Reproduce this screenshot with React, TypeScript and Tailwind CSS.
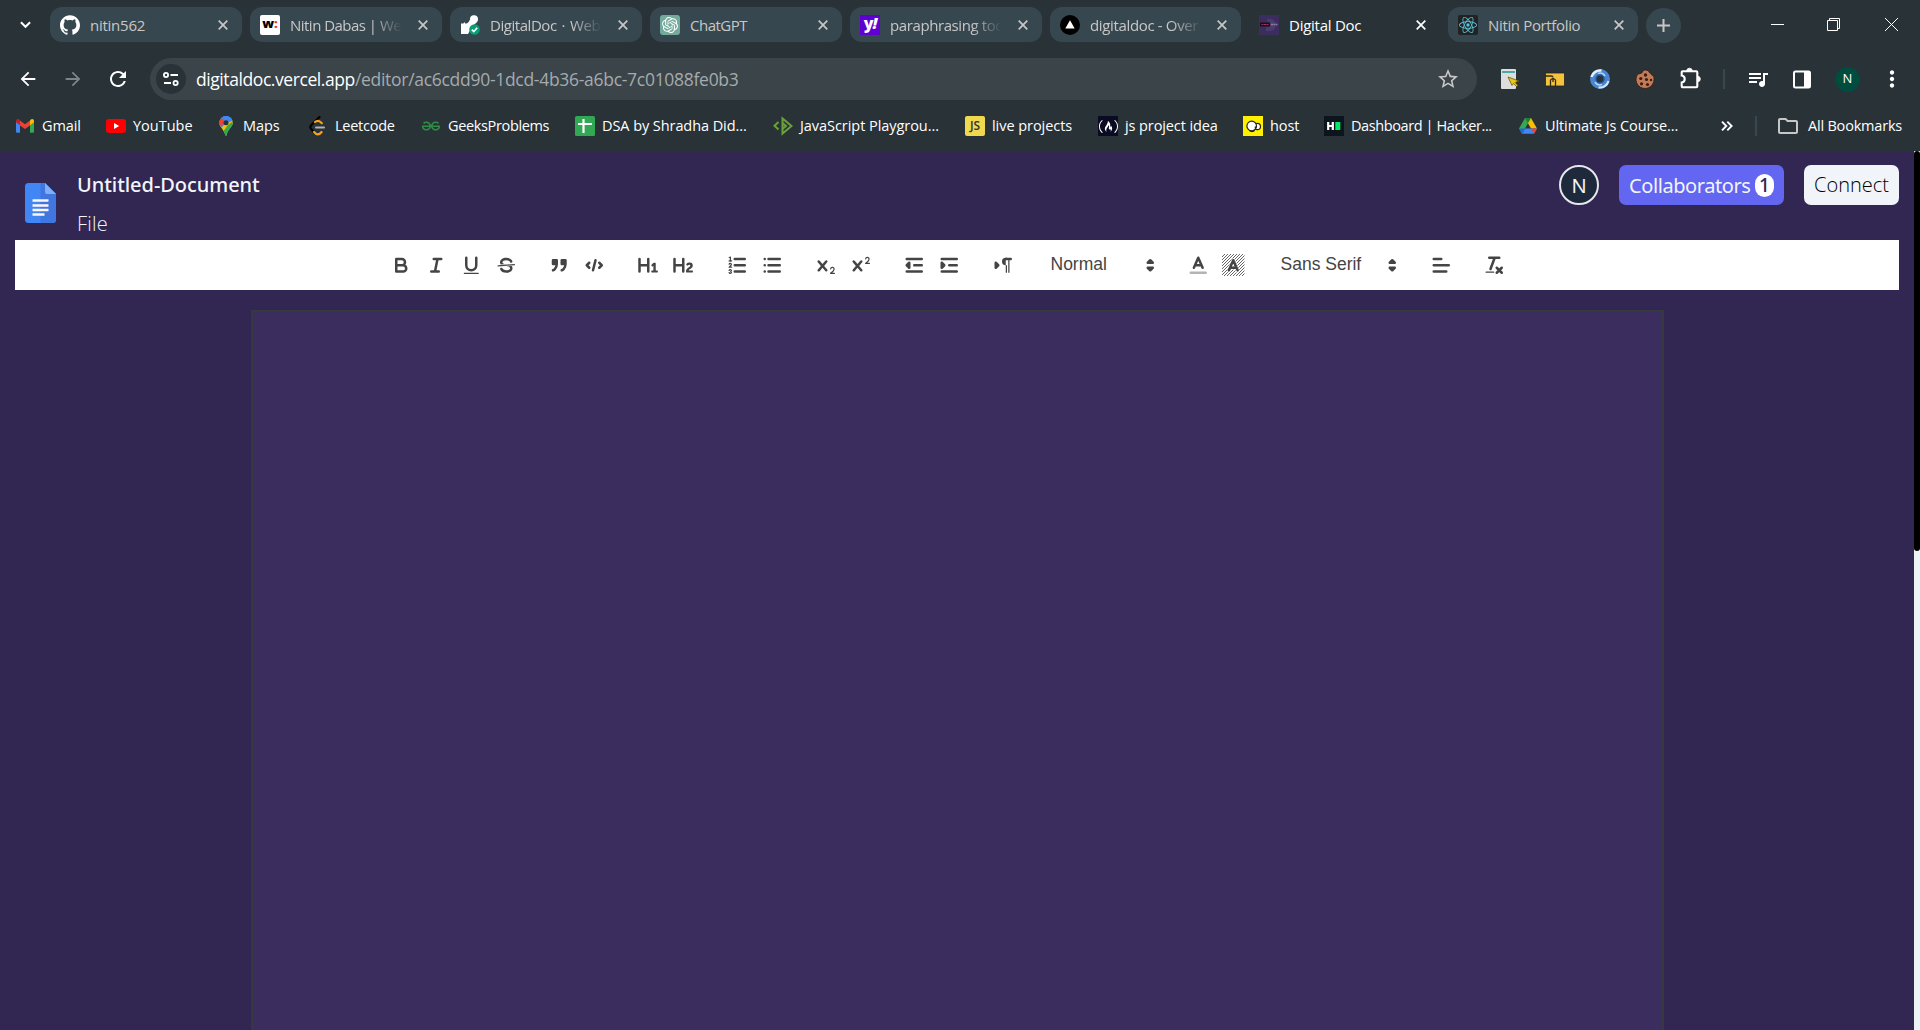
import React from "react";
import { SiGithub } from "react-icons/si";
import { SiOpenai, SiReact, SiGeeksforgeeks, SiFreecodecamp } from "react-icons/si";
import { MdOutlineQueueMusic, MdStarOutline, MdOutlineFolder, MdMoreVert, MdArrowBack, MdArrowForward, MdRefresh } from "react-icons/md";

type Kids = { children?: React.ReactNode };

/* ---------- favicons ---------- */
const Wellfound = () => (
  <span className="flex h-5 w-5 items-center justify-center rounded-[2px] bg-white pb-[3px] font-['Open_Sans',sans-serif] text-[13px] leading-none font-extrabold text-black">
    w<span className="text-red-500">:</span>
  </span>
);
const Peerlist = () => (
  <svg viewBox="0 0 20 20" className="h-5 w-5">
    <path d="M1 8.500h2.500l.8-1.500.9 1.500h1.500C8.500 7.500 9.500 6 10 4.500a4 4 0 0 1 8-.5c.3 3-3 5-5 6.500L8 19H1z" fill="#fff" />
    <circle cx="14.500" cy="14.500" r="5.300" fill="#0a9e78" />
    <path d="m11.800 14.600 2 2 3.400-3.800" fill="none" stroke="#fff" strokeWidth="1.600" />
  </svg>
);
const ChatGpt = () => (
  <span className="flex h-5 w-5 items-center justify-center rounded-[3px] bg-[#74aa9c]"><SiOpenai className="h-4 w-4 text-white" /></span>
);
const Yahoo = () => (
  <span className="flex h-5 w-5 items-center justify-center bg-[#5f01d1] pb-1 font-['Open_Sans',sans-serif] text-[16px] leading-none font-extrabold tracking-[-1px] text-white">y<i>!</i></span>
);
const Vercel = () => (
  <svg viewBox="0 0 20 20" className="h-5 w-5"><circle cx="10" cy="10" r="10" fill="#000" /><path d="M10 5.200 14.700 13.500H5.300z" fill="#fff" /></svg>
);
const DigitalDoc = () => (
  <svg viewBox="0 0 20 20" className="h-5 w-5">
    <rect width="20" height="20" fill="#3c2d5f" />
    <path d="M8 4h3a5.500 5.500 0 0 1 0 12H7v-4h3" fill="#4a3c6c" />
    <rect x="1" y="7.500" width="10" height="4" fill="#17101f" />
    <path d="M2.500 9.500h7" stroke="#b0305c" strokeWidth="1.200" strokeDasharray="2 .5" />
    <path d="M12 9.500h6.500" stroke="#8a809c" strokeWidth="1.500" strokeDasharray="2 .4" />
  </svg>
);
const ReactIcon = () => (
  <span className="flex h-5 w-5 items-center justify-center rounded-[2px] bg-[#222]"><SiReact className="h-[18px] w-[18px] text-[#58c4dc]" /></span>
);

const YouTube = () => (
  <svg viewBox="0 0 20 20" className="h-5 w-5"><rect y="3" width="20" height="14" rx="3" fill="#f00" /><path d="m8 7 5.200 3L8 13z" fill="#fff" /></svg>
);
const Gmail = () => (
  <svg viewBox="0 0 20 20" className="h-5 w-5">
    <path d="M1 5v10.500q0 1.300 1.300 1.300H5V8z" fill="#4285f4" />
    <path d="M15 8v8.800h2.700q1.300 0 1.300-1.300V5z" fill="#34a853" />
    <path d="M15 4.500V9.200l4-3V5c0-2-2-2.600-3.200-1.500z" fill="#fbbc04" />
    <path d="M5 4.500 10 8.200 15 4.500V9.400L10 13 5 9.400z" fill="#ea4335" />
    <path d="M1 5c0-2 2-2.600 3.200-1.500L5 4.200v5L1 6.200z" fill="#c5221f" />
  </svg>
);
const Maps = () => (
  <svg viewBox="0 0 20 20" className="h-5 w-5">
    <defs><clipPath id="pin"><path d="M10 0a6.700 6.700 0 0 0-6.700 6.800c0 4.700 4.700 6 6 12.400.2 1 1.200 1 1.400 0 1.300-6.400 6-7.700 6-12.400A6.700 6.700 0 0 0 10 0z" /></clipPath></defs>
    <g clipPath="url(#pin)">
      <rect width="20" height="20" fill="#34a853" />
      <path d="M0 12 10 1h10v4L6 20z" fill="#fbbc04" />
      <path d="M12 9 20 3v17H4z" fill="#34a853" />
      <path d="M0 0h20v3L10 7 4 13z" fill="#4285f4" />
      <path d="M0 0h4.500L10 6 2 12z" fill="#ea4335" />
      <path d="M4.500 1 12-1h8v4l-9 4z" fill="#4285f4" />
    </g>
    <circle cx="10" cy="6.800" r="2.500" fill="#283237" />
  </svg>
);
const Leetcode = () => (
  <svg viewBox="0 0 20 20" className="h-5 w-5" fill="none" strokeLinecap="round">
    <path d="M11.500 1 3.200 9.300q-1.700 1.700 0 3.600L6 16" stroke="#000" strokeWidth="2.200" />
    <path d="M7 6q2.800-2.500 5.800.2l1 1M6 15.800q3.800 5 7.600.2" stroke="#ffa116" strokeWidth="2.200" />
    <path d="M8 11.500h8" stroke="#b3b3b3" strokeWidth="2" />
  </svg>
);
const Sheet = () => (
  <svg viewBox="0 0 20 20" className="h-5 w-5"><rect width="20" height="20" rx="1.500" fill="#31a853" /><path d="M3 8h14M8.500 3v14" stroke="#fff" strokeWidth="2.200" /></svg>
);
const Playground = () => (
  <svg viewBox="0 0 20 20" className="h-5 w-5" fill="none" stroke="#6ba13c" strokeWidth="2">
    <path d="M5.500 6 1.500 9.800 5.500 13.500M9.500 2.500v15L18.500 10zM9.500 7l3.500 3-3.500 3" />
  </svg>
);
const Js = () => (
  <span className="flex h-5 w-5 items-center justify-center rounded-[2px] bg-[#f0d84f] font-['Open_Sans',sans-serif] text-[12px] leading-none font-semibold text-[#333]">JS</span>
);
const Fcc = () => (
  <span className="flex h-5 w-5 items-center justify-center bg-[#0a0a23]"><SiFreecodecamp className="h-[19px] w-[19px] text-white" /></span>
);
const Host = () => (
  <svg viewBox="0 0 20 20" className="h-5 w-5"><rect width="20" height="20" fill="#fff000" /><g fill="#fff" stroke="#222" strokeWidth="1.200"><circle cx="14.300" cy="10.500" r="3.200" /><circle cx="8.700" cy="10" r="4.800" /></g><path d="M6.500 14.500c2 1.500 4 1 5-.5M12.500 10.500v2" stroke="#222" strokeWidth="1.500" fill="none" /></svg>
);
const HackerRank = () => (
  <svg viewBox="0 0 20 20" className="h-5 w-5"><rect width="20" height="20" fill="#0e141e" /><path d="M4.200 6v8M8.800 6v8M4 10h5" stroke="#fff" strokeWidth="2.200" /><rect x="11.300" y="6" width="5" height="8" fill="#00ea64" /></svg>
);
const Drive = () => (
  <svg viewBox="0 0 20 20" className="h-5 w-5">
    <path d="M7 2h6l6 10.500h-6z" fill="#fbbc04" />
    <path d="M7 2 1 12.500 4 17.800 10 7.200z" fill="#34a853" />
    <path d="M7 12.500h12l-3 5.300H4z" fill="#4285f4" />
    <path d="M7 2h6L10 7.200z" fill="#188038" />
    <path d="M13 12.500h6l-3 5.300z" fill="#ea4335" />
    <path d="M1 12.500h6l-3 5.300z" fill="#2265d8" />
  </svg>
);

const X = ({ className }: { className: string }) => (
  <svg viewBox="0 0 10 10" className={className} fill="none" stroke="currentColor" strokeWidth="1.700"><path d="M.7.7l8.600 8.600M9.300.7.7 9.300" /></svg>
);

/* ---------- tab strip ---------- */
const tabs = [
  { icon: <SiGithub className="h-5 w-5 text-white" />, label: "nitin562", w: "w-[192px]", cls: "tracking-[-0.25px]" },
  { icon: <Wellfound />, label: "Nitin Dabas | We", w: "w-[192px]", cls: "tracking-[-0.52px]" },
  { icon: <Peerlist />, label: "DigitalDoc · Web", w: "w-[192px]", cls: "tracking-[-0.45px] [word-spacing:1.5px]" },
  { icon: <ChatGpt />, label: "ChatGPT", w: "w-[192px]", cls: "tracking-[-0.5px]" },
  { icon: <Yahoo />, label: "paraphrasing too", w: "w-[192px]", cls: "tracking-[-0.4px]" },
  { icon: <Vercel />, label: "digitaldoc - Over", w: "w-[191px]", cls: "tracking-[-0.35px]" },
  { icon: <DigitalDoc />, label: "Digital Doc", w: "w-[191px]", cls: "tracking-[-0.25px]", active: true },
  { icon: <ReactIcon />, label: "Nitin Portfolio", w: "w-[190px]", cls: "tracking-[-0.35px]" },
];

const TabStrip = () => (
  <div className="flex h-[50px] items-start pt-[7px] pl-[50px]">
    <svg viewBox="0 0 12 8" className="mt-[14px] mr-[19px] -ml-[30px] h-2 w-[11px] shrink-0" fill="none" stroke="#fff" strokeWidth="2.200"><path d="m1 1 5 5 5-5" /></svg>
    {tabs.map((t) => (
      <div key={t.label} className={`mr-2 flex h-[35px] shrink-0 items-center rounded-[12px] pr-[14px] pl-[10px] ${t.w} ${t.active ? "text-white" : "bg-[#37474f] text-[#c7c7c7]"}`}>
        {t.icon}
        <span className={`ml-[10px] w-[114px] shrink-0 overflow-hidden text-[15px] leading-5 whitespace-nowrap ${t.cls} ${t.label.length > 15 ? "[mask-image:linear-gradient(to_right,black_72%,transparent_98%)]" : ""}`}>{t.label}</span>
        <X className="ml-auto h-[10px] w-[10px]" />
      </div>
    ))}
    <div className="mt-px flex h-[35px] w-[35px] items-center justify-center rounded-full bg-[#37474f]">
      <svg viewBox="0 0 13 13" className="h-[13px] w-[13px]" stroke="#c7c7c7" strokeWidth="2"><path d="M6.500 0v13M0 6.500h13" /></svg>
    </div>
    <div className="mt-[11px] mr-[22px] ml-auto flex items-center gap-[43px] text-white">
      <svg viewBox="0 0 13 13" className="h-[13px] w-[13px]" stroke="currentColor"><path d="M0 6.500h13" /></svg>
      <svg viewBox="0 0 13 13" className="mr-[2px] h-[13px] w-[13px]" stroke="currentColor" fill="none"><path d="M.5 2.500h10v10H.5zM2.500 2.500v-2h10v10h-2" /></svg>
      <svg viewBox="0 0 13 13" className="h-[13px] w-[13px]" stroke="currentColor"><path d="m0 0 13 13M13 0 0 13" /></svg>
    </div>
  </div>
);

/* ---------- address bar ---------- */
const AddressRow = () => (
  <div className="flex h-[58px] items-center text-white">
    <MdArrowBack className="ml-[17px] h-[22px] w-[22px]" />
    <MdArrowForward className="ml-[23px] h-[22px] w-[22px] text-[#7d8589]" />
    <MdRefresh className="ml-[22px] h-6 w-6" />
    <div className="ml-5 flex h-[42px] w-[1327px] items-center rounded-full bg-[#3a4449]">
      <span className="ml-[6px] flex h-[30px] w-[30px] items-center justify-center rounded-full bg-[#283237]">
        <svg viewBox="0 0 16 14" className="h-[14px] w-4" fill="none" stroke="#fff" strokeWidth="1.800"><circle cx="3" cy="3" r="2.100" /><path d="M7.500 3H15M1 11h7" /><circle cx="12.600" cy="11" r="2.100" /></svg>
      </span>
      <span className="ml-[10px] text-[17.500px] leading-6 tracking-[-0.42px] whitespace-nowrap">digitaldoc.vercel.app</span>
      <span className="text-[17.500px] leading-6 tracking-[-0.29px] whitespace-nowrap text-[#a5abae]">/editor/ac6cdd90-1dcd-4b36-a6bc-7c01088fe0b3</span>
      <MdStarOutline className="mr-[17px] ml-auto h-6 w-6 text-[#c7c7c7]" />
    </div>
    <svg viewBox="0 0 20 20" className="ml-[23px] h-5 w-5"><rect x="1" width="15" height="20" rx="1" fill="#ddd" /><path d="M2 3h13" stroke="#4fa8a8" strokeWidth="2" /><path d="m8 8 11 4-4 1.500 3 3-1.500 1-3-3-1.500 2z" fill="#e8c51c" stroke="#5a4800" strokeWidth=".7" /></svg>
    <svg viewBox="0 0 20 20" className="ml-[25px] h-5 w-5"><path d="M.5 4h19v13H.5z" fill="#f5c23d" stroke="#222" strokeWidth=".8" /><path d="M0 7h6q2 0 2 1.500M5.500 17v-6a3 3 0 0 1 5 0v6M8 9v4" fill="none" stroke="#332a10" strokeWidth="1.300" /></svg>
    <svg viewBox="0 0 20 20" className="ml-[25px] h-5 w-5" fill="none"><circle cx="10" cy="10" r="7" stroke="#4a86cf" strokeWidth="6" /><path d="M1.500 8a9 9 0 0 1 10-6.500" stroke="#e4effc" strokeWidth="2.500" /><path d="M18.500 12a9 9 0 0 1-10 6.500" stroke="#d4e6fa" strokeWidth="2" /><path d="M5 13a6 6 0 0 0 7 2.500M15 7a6 6 0 0 0-7-2.500" stroke="#b5d2f2" strokeWidth="1.500" /><circle cx="10" cy="10" r="4" stroke="#1e58a4" strokeWidth="1.500" /></svg>
    <svg viewBox="0 0 20 20" className="ml-[25px] h-5 w-5"><path d="M8.500 1.200a6 6 0 0 1 5 .6q.5 2 2 2.500 1 2 3 2.700.7 1.500.5 3.500A9 9 0 1 1 2.500 5.500q1.200-1 2.500-.8 2.500-.5 3.500-3.500z" fill="#c17b57" stroke="#3b1d12" strokeWidth=".9" /><g fill="#3b1d12"><circle cx="10.500" cy="6" r="1.700" /><circle cx="5.800" cy="9.500" r="1.600" /><circle cx="11.500" cy="10.500" r="1.600" /><circle cx="6.500" cy="14.800" r="1.600" /><circle cx="12.500" cy="15.500" r="1.600" /><circle cx="16" cy="11" r="1.200" /></g></svg>
    <svg viewBox="0 0 22 22" className="ml-[25px] h-[22px] w-[22px] -translate-y-px" fill="none">
      <path d="M2.700 4.200H16.300q1 0 1 1V19.300q0 1-1 1H2.700q-1 0-1-1V15.500c4-.5 4-6.500 0-7V5.200q0-1 1-1z" stroke="#fff" strokeWidth="2.100" />
      <path d="M6.700 4a2.800 2.800 0 0 1 5.600 0zM17.500 9.200a2.800 2.800 0 0 1 0 5.600z" fill="#fff" stroke="#fff" strokeWidth=".8" />
    </svg>
    <span className="ml-[21px] h-5 w-[2px] bg-[#37474f]" />
    <MdOutlineQueueMusic className="ml-[21px] h-6 w-6" />
    <svg viewBox="0 0 18 18" className="ml-[23px] h-[19px] w-[18px]"><rect x="1" y="1" width="16" height="16" rx="1.500" fill="none" stroke="#fff" strokeWidth="2" /><path d="M11 1h6v16h-6z" fill="#fff" /></svg>
    <span className="ml-6 flex h-[25px] w-[25px] items-center justify-center rounded-full bg-[#004d40] text-[13px]">N</span>
    <MdMoreVert className="ml-[19px] h-[26px] w-[26px] shrink-0" />
  </div>
);

/* ---------- bookmarks ---------- */
const bookmarks = [
  { icon: <Gmail />, label: "Gmail", w: "w-[91px]", cls: "tracking-[-0.1px]" },
  { icon: <YouTube />, label: "YouTube", w: "w-[110px]", cls: "" },
  { icon: <Maps />, label: "Maps", w: "w-[92px]", cls: "tracking-[-0.1px]" },
  { icon: <Leetcode />, label: "Leetcode", w: "w-[113px]", cls: "tracking-[-0.25px]" },
  { icon: <SiGeeksforgeeks className="mx-px h-[18px] w-[18px] text-[#2f8d46]" />, label: "GeeksProblems", w: "w-[154px]", cls: "tracking-[-0.35px]" },
  { icon: <Sheet />, label: "DSA by Shradha Did...", w: "w-[198px]", cls: "tracking-[-0.07px]" },
  { icon: <Playground />, label: "JavaScript Playgrou...", w: "w-[192px]", cls: "tracking-[-0.05px]" },
  { icon: <Js />, label: "live projects", w: "w-[133px]", cls: "tracking-[-0.05px]" },
  { icon: <Fcc />, label: "js project idea", w: "w-[145px]", cls: "tracking-[-0.1px]" },
  { icon: <Host />, label: "host", w: "w-[81px]", cls: "tracking-[-0.1px]" },
  { icon: <HackerRank />, label: "Dashboard | Hacker...", w: "w-[194px]", cls: "tracking-[-0.4px]" },
  { icon: <Drive />, label: "Ultimate Js Course...", w: "w-[180px]", cls: "tracking-[-0.1px]" },
];

const Bookmarks = () => (
  <div className="flex h-[43px] items-center pb-[7px] pl-[15px] text-[14.500px] text-white">
    {bookmarks.map((b) => (
      <div key={b.label} className={`flex shrink-0 items-center gap-[7px] ${b.w}`}>
        <span className="shrink-0">{b.icon}</span>
        <span className={`leading-5 whitespace-nowrap ${b.cls}`}>{b.label}</span>
      </div>
    ))}
    <svg viewBox="0 0 12 10" className="ml-[23px] h-[10px] w-3" fill="none" stroke="#fff" strokeWidth="1.900"><path d="m1 .7 4.300 4.300L1 9.300M6.300.7 10.600 5 6.300 9.300" /></svg>
    <span className="ml-[22px] h-5 w-[2px] bg-[#37474f]" />
    <MdOutlineFolder className="ml-[19px] h-6 w-6 text-[#c7c7c7]" />
    <span className="ml-2 tracking-[-0.2px] whitespace-nowrap">All Bookmarks</span>
  </div>
);

/* ---------- editor toolbar ---------- */
const Glyph = ({ children }: Kids) => (
  <svg viewBox="0 0 18 18" className="h-[22.500px] w-[22.500px]" fill="none" stroke="#444" strokeWidth="2" strokeLinecap="round" strokeLinejoin="round">{children}</svg>
);
const Btn = ({ children }: Kids) => <button className="flex h-[30px] w-[35px] items-center justify-center"><Glyph>{children}</Glyph></button>;
const Group = ({ children }: Kids) => <div className="mr-[18.750px] flex">{children}</div>;
const F = ({ d }: { d: string }) => <path d={d} fill="#444" stroke="none" />;
const crossPath = "M9.65,5.241a1,1,0,0,0-1.409.108L6,7.964,3.759,5.349A1,1,0,0,0,2.192,6.592L4.684,9.5,2.241,12.35A1,1,0,0,0,3.71,13.707L6,11.036,8.241,13.65a1,1,0,1,0,1.567-1.243L7.316,9.5,9.759,6.651A1,1,0,0,0,9.65,5.241Z";

const Picker = ({ label, cls }: { label: string; cls: string }) => (
  <button className={`flex h-[30px] items-center justify-between pr-px pl-[11px] font-['Liberation_Sans',Arial,sans-serif] text-[17.500px] font-medium text-[#444] ${cls}`}>
    <span className="-mt-px">{label}</span>
    <Glyph><path d="M7 11 9 13 11 11ZM7 7 9 5 11 7Z" fill="#444" /></Glyph>
  </button>
);

const Toolbar = () => (
  <div className="mx-[15px] flex h-[50px] items-center justify-center bg-white">
    <Group>
      <Btn><path d="M5,4H9.500A2.500,2.500,0,0,1,9.500,9H5ZM5,9h5.500A2.500,2.500,0,0,1,10.500,14H5Z" /></Btn>
      <Btn><path d="M7 4h6M5 14h6M8 14 10 4" /></Btn>
      <Btn><path d="M5,3V9a4.012,4.012,0,0,0,4,4H9a4.012,4.012,0,0,0,4-4V3" /><rect x="3" y="15" width="12" height="1" rx=".5" fill="#444" stroke="none" /></Btn>
      <Btn>
        <path d="M15.500 8.500 2.500 9.500" strokeWidth="1" />
        <F d="M9.007,8C6.542,7.791,6,7.519,6,6.500,6,5.792,7.283,5,9,5c1.571,0,2.765.679,2.969,1.309a1,1,0,0,0,1.900-.617C13.356,4.106,11.354,3,9,3,6.200,3,4,4.538,4,6.500a3.200,3.200,0,0,0,.5,1.843Z" />
        <F d="M8.984,10C11.457,10.208,12,10.479,12,11.500c0,0.708-1.283,1.500-3,1.500-1.571,0-2.765-.679-2.969-1.309a1,1,0,1,0-1.900.617C4.644,13.894,6.646,15,9,15c2.800,0,5-1.538,5-3.500a3.200,3.200,0,0,0-.5-1.843Z" />
      </Btn>
    </Group>
    <Group>
      <Btn><path d="M4 5h3v3H4zM11 5h3v3h-3zM7,8c0,4.031-3,5-3,5M14,8c0,4.031-3,5-3,5" fill="#444" /></Btn>
      <Btn><path d="M5 7 3 9 5 11M13 7 15 9 13 11M10 5 8 13" /></Btn>
    </Group>
    <Group>
      <Btn><F d="M10,4V14a1,1,0,0,1-2,0V10H3v4a1,1,0,0,1-2,0V4A1,1,0,0,1,3,4V8H8V4a1,1,0,0,1,2,0Zm6.068,9.209H14.990V7.599a.541.541,0,0,0-.605-.605h-.627a1.011,1.011,0,0,0-.748.297L11.645,8.566a.544.544,0,0,0-.022.858l.286.308a.539.539,0,0,0,.847.033l.099-.088a1.214,1.214,0,0,0,.242-.353h.022s-.011.309-.011.605V13.209H12.041a.541.541,0,0,0-.605.605v.439a.541.541,0,0,0,.605.605h4.027a.541.541,0,0,0,.605-.605v-.439A.541.541,0,0,0,16.068,13.209Z" /></Btn>
      <Btn><F d="M16.740,13.814v.439a.541.541,0,0,1-.605.605H11.855a.584.584,0,0,1-.649-.605V14.013c0-2.905,3.399-3.422,3.399-4.555a.777.777,0,0,0-.847-.781,1.177,1.177,0,0,0-.836.385c-.275.264-.561.374-.858.132l-.429-.341c-.308-.242-.385-.518-.154-.814a2.972,2.972,0,0,1,2.454-1.177,2.454,2.454,0,0,1,2.684,2.409c0,2.453-3.179,2.927-3.278,3.938h2.794A.541.541,0,0,1,16.740,13.814ZM9,3A1,1,0,0,0,8,4V8H3V4A1,1,0,0,0,1,4V14a1,1,0,0,0,2,0V10H8v4a1,1,0,0,0,2,0V4A1,1,0,0,0,9,3Z" /></Btn>
    </Group>
    <Group>
      <Btn>
        <path d="M7 4h8M7 9h8M7 14h8" />
        <path strokeWidth="1" d="M2.500 5.500h2M4.500,10.500h-2c0-.234,1.850-1.076,1.850-2.234A0.959,0.959,0,0,0,2.500,8.156M2.500,14.846a0.959,0.959,0,0,0,1.850-.109A0.700,0.700,0,0,0,3.750,14a0.688,0.688,0,0,0,.6-0.736,0.959,0.959,0,0,0-1.850-.109" />
        <F d="M3.500,6A0.500,0.500,0,0,1,3,5.500V3.085l-0.276.138A0.500,0.500,0,0,1,2.053,3c-0.124-.247-0.023-0.324.224-0.447l1-.5A0.500,0.500,0,0,1,4,2.500v3A0.500,0.500,0,0,1,3.500,6Z" />
      </Btn>
      <Btn><path d="M6 4h9M6 9h9M6 14h9M3 4v0M3 9v0M3 14v0" /></Btn>
    </Group>
    <Group>
      <Btn><F d={crossPath} /><F d="M15.500,15H13.861a3.858,3.858,0,0,0,1.914-2.975,1.800,1.800,0,0,0-1.600-1.751A1.921,1.921,0,0,0,12.021,11.700a0.500,0.500,0,1,0,.957.291h0a0.914,0.914,0,0,1,1.053-.725,0.810,0.810,0,0,1,.744.762c0,1.076-1.170,1.870-1.940,2.431A1.456,1.456,0,0,0,12,15.500a0.500,0.500,0,0,0,.5.5h3A0.500,0.500,0,0,0,15.500,15Z" /></Btn>
      <Btn><F d={crossPath} /><F d="M15.500,7H13.861a4.015,4.015,0,0,0,1.914-2.975,1.800,1.800,0,0,0-1.600-1.751A1.922,1.922,0,0,0,12.021,3.700a0.500,0.500,0,1,0,.957.291,0.917,0.917,0,0,1,1.053-.725,0.810,0.810,0,0,1,.744.762c0,1.077-1.164,1.925-1.934,2.486A1.423,1.423,0,0,0,12,7.500a0.500,0.500,0,0,0,.5.5h3A0.500,0.500,0,0,0,15.500,7Z" /></Btn>
    </Group>
    <Group>
      <Btn><path d="M3 14h12M3 4h12M9 9h6" /><path d="M5 7v4L3 9z" fill="#444" /></Btn>
      <Btn><path d="M3 14h12M3 4h12M9 9h6" /><path d="M3 7v4l2-2z" fill="#444" /></Btn>
    </Group>
    <Group>
      <Btn><path d="M3 11 5 9 3 7zM15 4h-4" fill="#444" /><F d="M11,3a3,3,0,0,0,0,6h1V3H11ZM11 4h1v11h-1zM13 4h1v11h-1z" /></Btn>
    </Group>
    <Group><Picker label="Normal" cls="w-[122.500px]" /></Group>
    <Group>
      <Btn><path d="M3 15h12" opacity=".4" /><path d="M5.500 11 9 3 12.500 11M11.630 9H6.380" /></Btn>
      <Btn>
        <defs>
          <pattern id="hatch" width="2.400" height="2.400" patternUnits="userSpaceOnUse">
            <path d="M-.6.600.600-.6M0 2.400 2.400 0M1.800 3 3 1.800" strokeWidth=".65" strokeLinecap="butt" />
          </pattern>
        </defs>
        <path d="M0 0h18v18H0z" fill="url(#hatch)" stroke="none" />
        <path d="M5.500 13.500 9 5 12.500 13.500M11.630 11H6.380" stroke="#fff" strokeWidth="3.400" opacity=".6" />
        <path d="M5.500 13 9 5 12.500 13M11.630 11H6.380" />
      </Btn>
    </Group>
    <Group><Picker label="Sans Serif" cls="w-[135px]" /></Group>
    <Group><Btn><path d="M3 9h12M3 14h10M3 4h6" /></Btn></Group>
    <Group>
      <Btn><path d="M5 3h8M6 12 9.350 3M11 11l4 4M15 11l-4 4" /><rect x="2" y="14" width="7" height="1" rx=".5" fill="#444" stroke="none" /></Btn>
    </Group>
  </div>
);

const DocLogo = () => (
  <svg viewBox="0 0 31 40" className="h-10 w-[31px]">
    <path d="M3.500 0H20L31 11v25.500a3.500 3.500 0 0 1-3.500 3.500h-24A3.500 3.500 0 0 1 0 36.500v-33A3.500 3.500 0 0 1 3.500 0z" fill="#4086f4" />
    <path d="M15.500 0H20L31 11v25.500a3.500 3.500 0 0 1-3.500 3.500h-12z" fill="#4175df" />
    <path d="M20 0 31 11h-9a2 2 0 0 1-2-2z" fill="#80aef8" />
    <path d="M7.500 17.500h16M7.500 22.500h16M7.500 27h16M7.500 31.500h12" stroke="#fff5f5" strokeWidth="2.400" />
  </svg>
);

const DocHeader = () => (
  <div className="flex h-[89px] items-start pr-[15px] pl-[24.500px] font-['Noto_Sans',sans-serif] text-[#f1f5f9]">
    <div className="mt-8"><DocLogo /></div>
    <div className="ml-[21.500px] flex flex-col pt-[20px]">
      <span className="text-[20px] leading-[28px] font-medium tracking-[-0.05px]">Untitled-Document</span>
      <span className="mt-[11px] font-['Open_Sans',sans-serif] text-[20px] leading-[28px] font-light tracking-[0.2px]">File</span>
    </div>
    <div className="mt-[14px] ml-auto flex items-center gap-5">
      <span className="flex h-10 w-10 items-center justify-center rounded-full border-2 border-[#e5e7eb] bg-[#1e293b] pt-px text-[20px]">N</span>
      <button className="flex h-10 w-[165px] items-center justify-between rounded-[7px] bg-[#6366f1] px-[10px] text-[20px]">
        <span className="pt-px tracking-[-0.42px]">Collaborators</span>
        <span className="flex h-[23px] w-[19px] items-center justify-center rounded-full bg-white text-[19px] font-medium text-[#322653]">1</span>
      </button>
      <button className="h-10 w-[95px] rounded-[7px] bg-[#f1f5f9] pb-px font-['Open_Sans',sans-serif] text-[20px] font-light text-black">Connect</button>
    </div>
  </div>
);

export default function App() {
  return (
    <div className="flex h-[1030px] w-[1920px] flex-col overflow-hidden bg-[#283237] font-['Open_Sans','Noto_Sans',sans-serif]">
      <TabStrip />
      <AddressRow />
      <Bookmarks />
      <div className="flex min-h-0 flex-1 bg-[#322653]">
        <main className="flex w-[1914px] flex-col overflow-hidden">
          <DocHeader />
          <Toolbar />
          <div className="mt-5 ml-[251px] w-[1413px] flex-1 border-2 border-b-0 border-[#363940] bg-[#3b2e5f]" />
        </main>
        <div className="w-[6px] bg-[#ebf5f9]"><div className="h-[400px] rounded-full bg-black" /></div>
      </div>
    </div>
  );
}
